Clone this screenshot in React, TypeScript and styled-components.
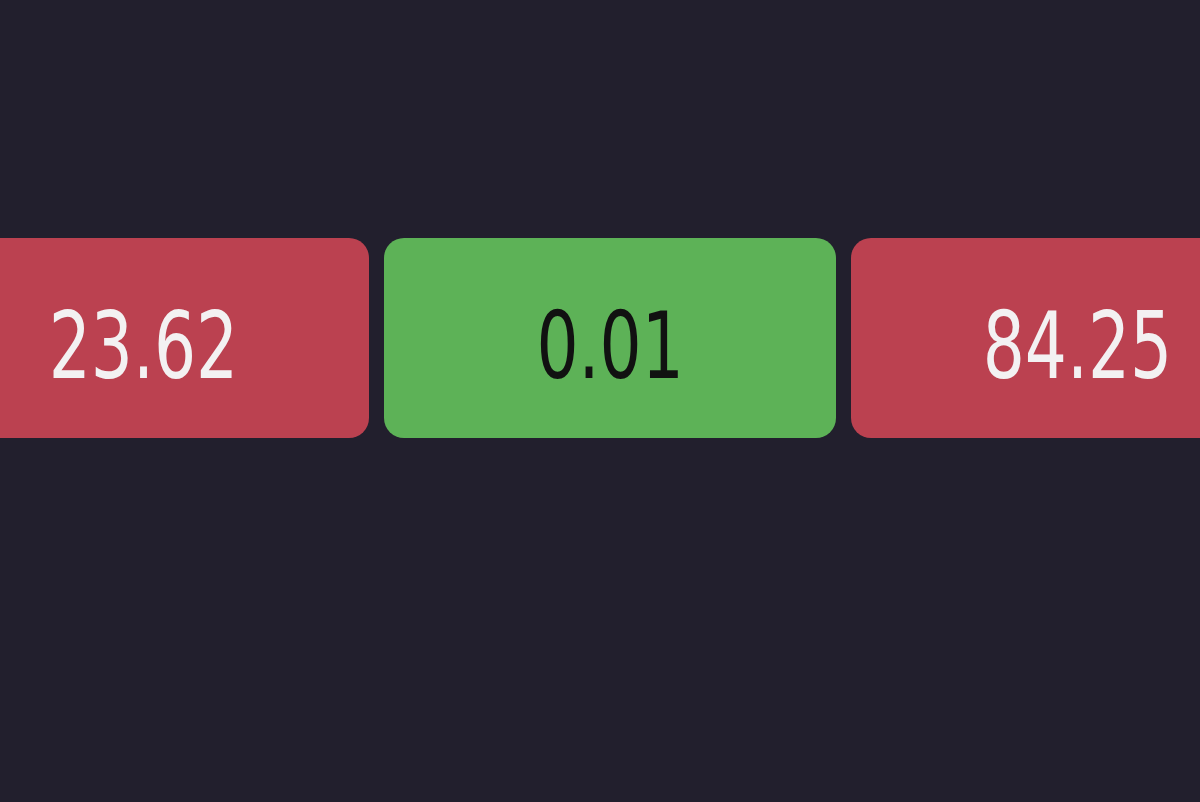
import React from 'react';
import styled, { createGlobalStyle } from 'styled-components';

const GlobalStyle = createGlobalStyle`
  html, body {
    margin: 0;
    padding: 0;
    background: #221f2d;
    overflow: hidden;
  }
`;

const Page = styled.main`
  width: 1200px;
  height: 802px;
  box-sizing: border-box;
  padding-top: 238px;
  overflow: hidden;
`;

const TileRow = styled.div`
  display: flex;
  gap: 15px;
  margin-left: -82px;
`;

const Tile = styled.div<{ $tone: 'loss' | 'gain' }>`
  flex: 0 0 452px;
  height: 200px;
  border-radius: 20px;
  background: ${p => (p.$tone === 'gain' ? '#5db257' : '#bb4150')};
  color: ${p => (p.$tone === 'gain' ? '#111111' : '#f3f1f2')};
  display: flex;
  align-items: center;
  justify-content: center;

  &:first-child {
    flex-basis: 451px;
  }
`;

const Value = styled.span`
  display: inline-block;
  font-family: "DejaVu Sans Condensed", "Liberation Sans", sans-serif;
  font-size: 92px;
  line-height: 1;
  margin-top: 18px;
  transform: scaleX(0.8);
`;

const quotes: { value: string; tone: 'loss' | 'gain' }[] = [
  { value: '23.62', tone: 'loss' },
  { value: '0.01', tone: 'gain' },
  { value: '84.25', tone: 'loss' },
];

export default function App() {
  return (
    <>
      <GlobalStyle />
      <Page>
        <TileRow>
          {quotes.map(q => (
            <Tile key={q.value} $tone={q.tone}>
              <Value>{q.value}</Value>
            </Tile>
          ))}
        </TileRow>
      </Page>
    </>
  );
}
